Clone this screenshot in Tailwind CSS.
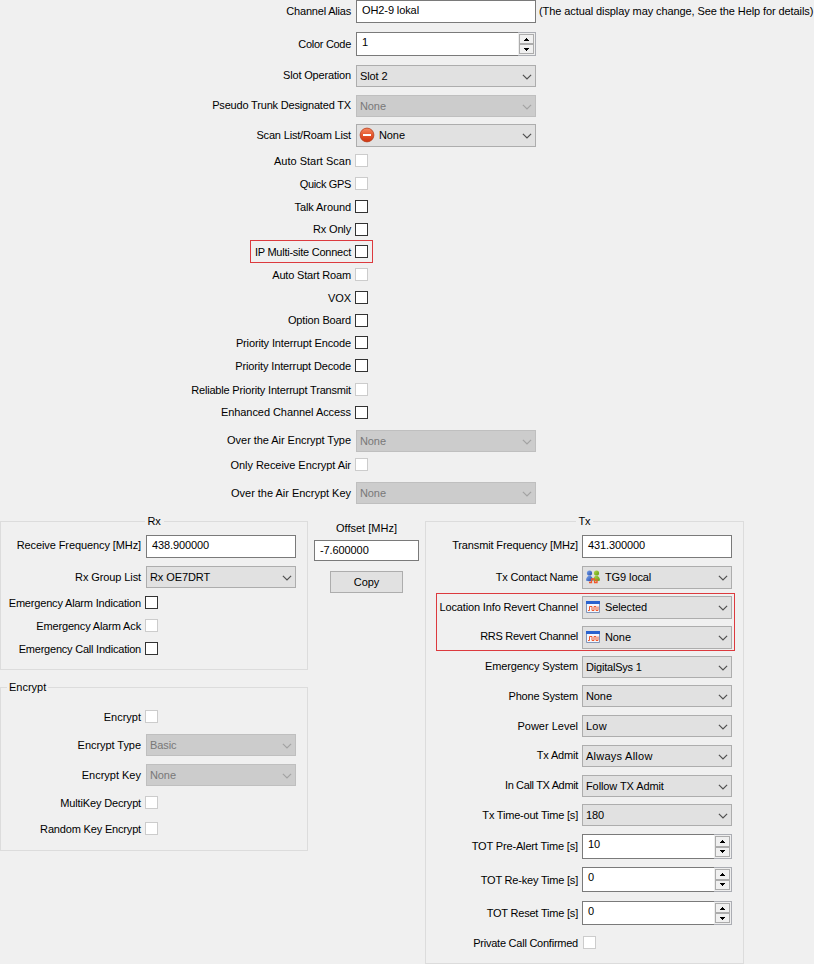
<!DOCTYPE html>
<html lang="en">
<head>
<meta charset="utf-8">
<title>Channel settings</title>
<script src="https://cdn.jsdelivr.net/npm/@tailwindcss/browser@4"></script>
</head>
<body class="w-[814px] h-[964px] overflow-hidden bg-[#f0f0f0] font-['Liberation_Sans',Arial,sans-serif] text-[11px] leading-[12px] tracking-[-0.1px] text-black whitespace-nowrap
[&_.row]:flex [&_.row]:items-start
[&_label]:block [&_label]:shrink-0 [&_label]:text-right
[&_.sel]:relative [&_.sel]:flex [&_.sel]:h-[22px] [&_.sel]:shrink-0 [&_.sel]:border [&_.sel]:border-[#adadad] [&_.sel]:bg-[#e1e1e1] [&_.sel]:pl-[3px] [&_.sel]:pt-[4px] [&_.sel]:ml-[5px]
[&_.dis]:border-[#bfbfbf]! [&_.dis]:bg-[#cccccc]! [&_.dis]:text-[#787878]
[&_.inp]:block [&_.inp]:h-[23px] [&_.inp]:shrink-0 [&_.inp]:border [&_.inp]:border-[#7a7a7a] [&_.inp]:bg-white [&_.inp]:pl-[5px] [&_.inp]:pt-[3px] [&_.inp]:ml-[5px]
[&_.cb]:block [&_.cb]:size-[13px] [&_.cb]:shrink-0 [&_.cb]:border [&_.cb]:border-[#333333] [&_.cb]:bg-white [&_.cb]:ml-[4px]
[&_.cx]:border-[#cccccc]!
[&_.chev]:ml-auto [&_.chev]:mr-[3px] [&_.chev]:mt-[4px] [&_.chev]:h-[6px] [&_.chev]:w-[10px] [&_.chev]:shrink-0 [&_.chev]:text-[#505050]
[&_.dis_.chev]:text-[#a3a3a3]
[&_.ico]:size-[16px] [&_.ico]:shrink-0 [&_.ico]:-mt-[2px] [&_.ico]:-ml-[1px] [&_.ico]:mr-[4px]
[&_.spin]:flex [&_.spin]:shrink-0 [&_.spin]:ml-[5px] [&_.spin]:bg-white [&_.spin]:border [&_.spin]:border-[#7a7a7a] [&_.spin]:border-r-0 [&_.spin]:pl-[5px] [&_.spin]:justify-between
[&_.val]:pt-[3px]
[&_.btns]:-my-px [&_.btns]:flex [&_.btns]:w-[18px] [&_.btns]:flex-col [&_.btns]:border [&_.btns]:border-l-0 [&_.btns]:border-[#abadb3] [&_.btns]:bg-[#eeeeee] [&_.btns]:px-px [&_.btns]:py-px
[&_.btns_b]:flex [&_.btns_b]:flex-1 [&_.btns_b]:items-center [&_.btns_b]:justify-center [&_.btns_b]:border [&_.btns_b]:border-[#acacac] [&_.btns_b]:bg-[#f0f0f0]
[&_.tri]:h-[3px] [&_.tri]:w-[5px]">

<svg class="absolute size-0">
  <defs>
  <linearGradient id="red" x1="0" y1="0" x2="0" y2="1"><stop offset="0" stop-color="#f58a62"/><stop offset=".5" stop-color="#e4572c"/><stop offset="1" stop-color="#cf3410"/></linearGradient>
  <linearGradient id="bl" x1="0" y1="0" x2="1" y2="1"><stop offset="0" stop-color="#7fa8ee"/><stop offset="1" stop-color="#1c45a8"/></linearGradient>
  <linearGradient id="gr" x1="0" y1="0" x2="1" y2="1"><stop offset="0" stop-color="#b5d94c"/><stop offset="1" stop-color="#5f9c12"/></linearGradient>
  </defs>
  <symbol id="chev" viewBox="0 0 10 6"><path d="M.9 .9 5 5 9.1 .9" fill="none" stroke="currentColor" stroke-width="1.2"/></symbol>
  <symbol id="up" viewBox="0 0 5 3"><path d="M2 0h1v1h1v1h1v1H0V2h1V1h1z" fill="#000"/></symbol>
  <symbol id="down" viewBox="0 0 5 3"><path d="M0 0h5v1H4v1H3v1H2V2H1V1H0z" fill="#000"/></symbol>
  <symbol id="stop" viewBox="0 0 16 16"><circle cx="8" cy="8" r="6.900" fill="url(#red)" stroke="#b9401f" stroke-width=".8"/><path d="M4 7h8v2H4z" fill="#fff"/></symbol>
  <symbol id="win" viewBox="0 0 16 16"><path d="M1.500 2.500h13v11h-13z" fill="#f4f8ff" stroke="#8195b8"/><path d="M1 2h14v3H1z" fill="#2a63cf"/><path d="M3 11.500h1.500v-4H7v4h2v-4h2v4h2v-4" fill="none" stroke="#f0582c"/></symbol>
  <symbol id="ppl" viewBox="0 0 16 16"><circle cx="4.500" cy="4" r="2.600" fill="url(#bl)"/><path d="M1 11.500c0-6.500 7-6.500 7 0q-3.500 1.400-7 0z" fill="url(#bl)"/><circle cx="11.500" cy="4" r="2.600" fill="url(#gr)"/><path d="M8 11.500c0-6.500 7-6.500 7 0q-3.500 1.400-7 0z" fill="url(#gr)"/><path d="M4 13.500h2.500V10h3v3.500M9 13.500h3V10" fill="none" stroke="#f0582c" stroke-width="1.300"/></symbol>
</svg>

<main class="relative">
<section class="h-[514px] [&_label]:w-[351px] [&_.sel]:w-[180px] [&_.inp]:w-[180px] [&_.spin]:w-[180px]">
  <div class="row h-[32px]"><label class="mt-[5px] tracking-[-0.2px]">Channel Alias</label><div class="inp">OH2-9 lokal</div><span class="ml-[3px] mt-[5px] tracking-[-0.09px]">(The actual display may change, See the Help for details)</span></div>
  <div class="row h-[33px]"><label class="mt-[6px] tracking-[-0.3px]">Color Code</label><div class="spin h-[24px]"><span class="val">1</span><div class="btns"><b><svg class="tri"><use href="#up"/></svg></b><b><svg class="tri"><use href="#down"/></svg></b></div></div></div>
  <div class="row h-[30px]"><label class="mt-[4px] tracking-[-0.17px]">Slot Operation</label><div class="sel">Slot 2<svg class="chev"><use href="#chev"/></svg></div></div>
  <div class="row h-[29px]"><label class="mt-[4px] tracking-[-0.18px]">Pseudo Trunk Designated TX</label><div class="sel dis">None<svg class="chev"><use href="#chev"/></svg></div></div>
  <div class="row h-[30px]"><label class="mt-[5px] tracking-[-0.17px]">Scan List/Roam List</label><div class="sel h-[23px]!"><svg class="ico"><use href="#stop"/></svg>None<svg class="chev"><use href="#chev"/></svg></div></div>
  <div class="row h-[23px]"><label class="mt-[1px] tracking-[0px]">Auto Start Scan</label><i class="cb cx"></i></div>
  <div class="row h-[23px]"><label class="mt-[1px] tracking-[-0.35px]">Quick GPS</label><i class="cb cx"></i></div>
  <div class="row h-[23px]"><label class="mt-[1px]">Talk Around</label><i class="cb"></i></div>
  <div class="row h-[22px]"><label class="tracking-[-0.15px]">Rx Only</label><i class="cb"></i></div>
  <div class="row h-[23px]"><label class="mt-[1px] tracking-[-0.25px]">IP Multi-site Connect</label><i class="cb"></i></div>
  <div class="row h-[23px]"><label class="mt-[1px] tracking-[-0.17px]">Auto Start Roam</label><i class="cb cx"></i></div>
  <div class="row h-[23px]"><label class="mt-[1px]">VOX</label><i class="cb"></i></div>
  <div class="row h-[22px]"><label class="tracking-[-0.15px]">Option Board</label><i class="cb"></i></div>
  <div class="row h-[23px]"><label class="mt-[1px] tracking-[-0.14px]">Priority Interrupt Encode</label><i class="cb"></i></div>
  <div class="row h-[24px]"><label class="mt-[1px] tracking-[-0.14px]">Priority Interrupt Decode</label><i class="cb"></i></div>
  <div class="row h-[23px]"><label class="mt-[1px] tracking-[-0.18px]">Reliable Priority Interrupt Transmit</label><i class="cb cx"></i></div>
  <div class="row h-[24px]"><label class="tracking-[-0.06px]">Enhanced Channel Access</label><i class="cb"></i></div>
  <div class="row h-[28px]"><label class="mt-[4px] tracking-[-0.05px]">Over the Air Encrypt Type</label><div class="sel dis">None<svg class="chev"><use href="#chev"/></svg></div></div>
  <div class="row h-[24px]"><label class="mt-[1px] tracking-[-0.05px]">Only Receive Encrypt Air</label><i class="cb cx"></i></div>
  <div class="row h-[32px]"><label class="mt-[5px] tracking-[-0.02px]">Over the Air Encrypt Key</label><div class="sel dis">None<svg class="chev"><use href="#chev"/></svg></div></div>
</section>

<div class="flex items-start">
  <div class="w-[308px] pt-[7px] [&_label]:w-[140px] [&_.sel]:w-[150px] [&_.inp]:w-[150px]">
    <section class="h-[149px] border border-[#dcdcdc]">
      <h2 class="mx-auto -mt-[7px] h-[20px] w-[19px] bg-[#f0f0f0] text-center">Rx</h2>
      <div class="row h-[31px]"><label class="mt-[4px]">Receive Frequency [MHz]</label><div class="inp">438.900000</div></div>
      <div class="row h-[30px]"><label class="mt-[5px]">Rx Group List</label><div class="sel">Rx OE7DRT<svg class="chev"><use href="#chev"/></svg></div></div>
      <div class="row h-[23px]"><label class="mt-[1px] tracking-[-0.18px]">Emergency Alarm Indication</label><i class="cb"></i></div>
      <div class="row h-[23px]"><label class="mt-[1px] tracking-[-0.15px]">Emergency Alarm Ack</label><i class="cb cx"></i></div>
      <div class="row h-[23px]"><label class="mt-[1px] tracking-[-0.22px]">Emergency Call Indication</label><i class="cb"></i></div>
    </section>
    <section class="mt-[17px] h-[164px] border border-[#dcdcdc]">
      <h2 class="-mt-[7px] ml-[6px] h-[29px] w-[41px]"><span class="block bg-[#f0f0f0] pl-[2px] tracking-[0px]">Encrypt</span></h2>
      <div class="row h-[24px]"><label class="mt-[1px] tracking-[0px]">Encrypt</label><i class="cb cx"></i></div>
      <div class="row h-[30px]"><label class="mt-[5px] tracking-[-0.05px]">Encrypt Type</label><div class="sel dis">Basic<svg class="chev"><use href="#chev"/></svg></div></div>
      <div class="row h-[32px]"><label class="mt-[5px] tracking-[0px]">Encrypt Key</label><div class="sel dis">None<svg class="chev"><use href="#chev"/></svg></div></div>
      <div class="row h-[26px]"><label class="mt-[1px] tracking-[-0.15px]">MultiKey Decrypt</label><i class="cb cx"></i></div>
      <div class="row h-[23px]"><label class="mt-[1px] tracking-[-0.17px]">Random Key Encrypt</label><i class="cb cx"></i></div>
    </section>
  </div>

  <div class="flex w-[117px] flex-col items-center pt-[8px]">
    <span class="tracking-[0px]">Offset [MHz]</span>
    <div class="inp mt-[6px] ml-0! h-[21px]! w-[105px]">-7.600000</div>
    <button class="mt-[10px] h-[22px] w-[73px] border border-[#adadad] bg-[#e1e1e1]">Copy</button>
  </div>

  <section class="mt-[7px] h-[443px] w-[319px] border border-[#dcdcdc] [&_label]:w-[152px] [&_.sel]:w-[150px] [&_.sel]:ml-[4px]! [&_.inp]:ml-[4px]! [&_.inp]:w-[150px] [&_.spin]:ml-[4px]! [&_.spin]:w-[150px]">
    <h2 class="mx-auto -mt-[7px] h-[20px] w-[17px] bg-[#f0f0f0] text-center">Tx</h2>
    <div class="row h-[31px]"><label class="mt-[4px] tracking-[-0.14px]">Transmit Frequency [MHz]</label><div class="inp">431.300000</div></div>
    <div class="row h-[30px]"><label class="mt-[5px] tracking-[-0.23px]">Tx Contact Name</label><div class="sel h-[23px]!"><svg class="ico"><use href="#ppl"/></svg>TG9 local<svg class="chev"><use href="#chev"/></svg></div></div>
    <div class="row h-[30px]"><label class="mt-[5px] tracking-[-0.14px]">Location Info Revert Channel</label><div class="sel h-[23px]!"><svg class="ico"><use href="#win"/></svg>Selected<svg class="chev"><use href="#chev"/></svg></div></div>
    <div class="row h-[30px]"><label class="mt-[4px] tracking-[-0.27px]">RRS Revert Channel</label><div class="sel h-[23px]!"><svg class="ico"><use href="#win"/></svg>None<svg class="chev"><use href="#chev"/></svg></div></div>
    <div class="row h-[29px]"><label class="mt-[4px] tracking-[-0.15px]">Emergency System</label><div class="sel tracking-[-0.2px]">DigitalSys 1<svg class="chev"><use href="#chev"/></svg></div></div>
    <div class="row h-[30px]"><label class="mt-[5px] tracking-[-0.17px]">Phone System</label><div class="sel">None<svg class="chev"><use href="#chev"/></svg></div></div>
    <div class="row h-[30px]"><label class="mt-[5px] tracking-[0px]">Power Level</label><div class="sel tracking-[0.2px]">Low<svg class="chev"><use href="#chev"/></svg></div></div>
    <div class="row h-[30px]"><label class="mt-[4px] tracking-[-0.2px]">Tx Admit</label><div class="sel tracking-[0.25px]">Always Allow<svg class="chev"><use href="#chev"/></svg></div></div>
    <div class="row h-[29px]"><label class="mt-[4px] tracking-[-0.35px]">In Call TX Admit</label><div class="sel">Follow TX Admit<svg class="chev"><use href="#chev"/></svg></div></div>
    <div class="row h-[30px]"><label class="mt-[5px] tracking-[-0.2px]">Tx Time-out Time [s]</label><div class="sel">180<svg class="chev"><use href="#chev"/></svg></div></div>
    <div class="row h-[33px]"><label class="mt-[6px] tracking-[-0.15px]">TOT Pre-Alert Time [s]</label><div class="spin h-[25px]"><span class="val">10</span><div class="btns"><b><svg class="tri"><use href="#up"/></svg></b><b><svg class="tri"><use href="#down"/></svg></b></div></div></div>
    <div class="row h-[34px]"><label class="mt-[7px] tracking-[-0.2px]">TOT Re-key Time [s]</label><div class="spin h-[25px]"><span class="val">0</span><div class="btns"><b><svg class="tri"><use href="#up"/></svg></b><b><svg class="tri"><use href="#down"/></svg></b></div></div></div>
    <div class="row h-[35px]"><label class="mt-[6px] tracking-[-0.2px]">TOT Reset Time [s]</label><div class="spin h-[24px]"><span class="val">0</span><div class="btns"><b><svg class="tri"><use href="#up"/></svg></b><b><svg class="tri"><use href="#down"/></svg></b></div></div></div>
    <div class="row h-[20px]"><label class="mt-[1px] tracking-[-0.24px]">Private Call Confirmed</label><i class="cb cx ml-[5px]!"></i></div>
  </section>
</div>

<div class="pointer-events-none absolute left-[250px] top-[240px] h-[23px] w-[123px] border border-[#dc3a3e]"></div>
<div class="pointer-events-none absolute left-[436px] top-[593px] h-[58px] w-[299px] border border-[#dc3a3e]"></div>
</main>
</body>
</html>
